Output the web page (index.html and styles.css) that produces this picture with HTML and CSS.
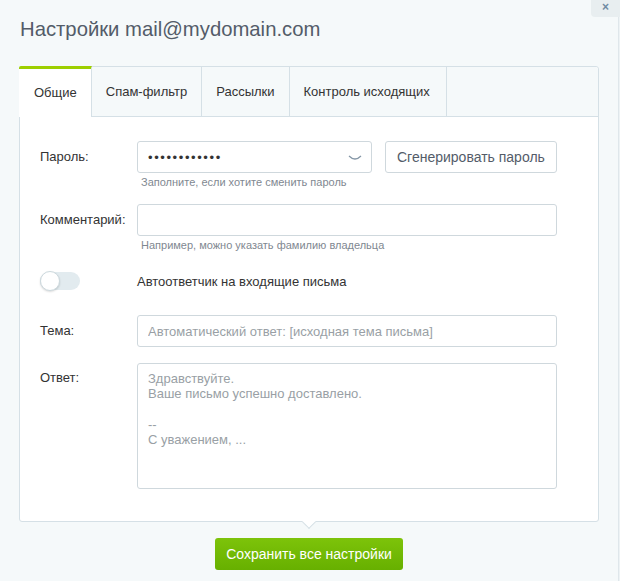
FILE: index.html
```html
<!DOCTYPE html>
<html lang="ru">
<head>
    <meta charset="UTF-8">
    <title>Настройки ящика</title>
    <link rel="stylesheet" href="styles.css">
</head>
<body>

<div class="popup">
    <span class="close" title="Закрыть">&times;</span>

    <h1 class="title">Настройки mail@mydomain.com</h1>

    <div class="panel">
        <div class="tabs">
            <div class="tab tab-active">Общие</div>
            <div class="tab">Спам-фильтр</div>
            <div class="tab">Рассылки</div>
            <div class="tab">Контроль исходящих</div>
        </div>

        <div class="panel-body">
            <div class="row row-pass">
                <div class="label">Пароль:</div>
                <div class="field">
                    <div class="pass-line">
                        <div class="pass-wrap">
                            <input class="input input-pass" type="password" value="123456789012">
                            <svg class="eye" width="14" height="6" viewBox="0 0 14 6">
                                <path d="M1 1 Q7 7 13 1" fill="none" stroke="#8496a6" stroke-width="1.2"/>
                            </svg>
                        </div>
                        <button class="btn">Сгенерировать пароль</button>
                    </div>
                    <div class="hint">Заполните, если хотите сменить пароль</div>
                </div>
            </div>

            <div class="row row-comment">
                <div class="label">Комментарий:</div>
                <div class="field">
                    <input class="input" type="text">
                    <div class="hint">Например, можно указать фамилию владельца</div>
                </div>
            </div>

            <div class="row row-switch">
                <div class="label">
                    <span class="switch"><span class="knob"></span></span>
                </div>
                <div class="field switch-text">Автоответчик на входящие письма</div>
            </div>

            <div class="row row-subject">
                <div class="label">Тема:</div>
                <div class="field">
                    <input class="input" type="text" placeholder="Автоматический ответ: [исходная тема письма]">
                </div>
            </div>

            <div class="row row-answer">
                <div class="label label-top">Ответ:</div>
                <div class="field">
                    <textarea class="textarea" placeholder="Здравствуйте.&#10;Ваше письмо успешно доставлено.&#10;&#10;--&#10;С уважением, ..."></textarea>
                </div>
            </div>
        </div>
    </div>

    <div class="footer">
        <button class="btn-save">Сохранить все настройки</button>
    </div>
</div>

</body>
</html>
```

FILE: styles.css
```css
* {
    margin: 0;
    padding: 0;
    box-sizing: border-box;
}

body {
    background: #eef3f5;
    font-family: "Liberation Sans", Arial, sans-serif;
    color: #333;
    height: 581px;
    overflow: hidden;
}

.popup {
    width: 619px;
    height: 581px;
    background: #f5f9fa;
    border-right: 1px solid #dfe7eb;
}

.close {
    position: absolute;
    top: 0;
    right: 0;
    width: 29px;
    height: 17px;
    background: #e8eef0;
    border-bottom-left-radius: 4px;
    color: #6f8ba3;
    font-size: 12px;
    font-weight: bold;
    line-height: 15px;
    text-align: center;
}

.title {
    padding: 17px 20px 0;
    font-size: 20.3px;
    font-weight: normal;
    line-height: 24px;
    color: #535c69;
}

.panel {
    position: relative;
    margin: 25px 0 0 19px;
    width: 580px;
    border: 1px solid #d5e0e6;
    border-radius: 3px;
    background: #fff;
}

/* уголок под панелью */
.panel:after {
    content: "";
    position: absolute;
    left: 284px;
    bottom: -6px;
    width: 9px;
    height: 9px;
    background: #fff;
    border-right: 1px solid #d5e0e6;
    border-bottom: 1px solid #d5e0e6;
    transform: rotate(45deg);
}

.tabs {
    display: flex;
    height: 50px;
    background: #f5f9fa;
    border-bottom: 1px solid #d5e0e6;
    border-radius: 3px 3px 0 0;
}

.tab {
    padding: 0 14px;
    line-height: 49px;
    font-size: 13px;
    color: #333;
    border-right: 1px solid #d5e0e6;
}

.tab-active {
    margin: -1px 0 -1px -1px;
    padding-left: 15px;
    height: 51px;
    line-height: 47px;
    background: #fff;
    border-top: 3px solid #9dcf00;
    border-radius: 2px 0 0 0;
}

.tab:last-child {
    padding-right: 16px;
}

.panel-body {
    padding: 24px 40px 32px 20px;
}

.row {
    display: flex;
}

.label {
    width: 97px;
    flex-shrink: 0;
    font-size: 13px;
    line-height: 32px;
    color: #333;
}

.label-top {
    line-height: 30px;
}

.field {
    width: 420px;
}

.row-comment {
    margin-top: 15px;
}

.row-switch {
    margin-top: 19px;
    height: 20px;
    align-items: center;
}

.row-subject {
    margin-top: 24px;
}

.row-answer {
    margin-top: 16px;
}

.pass-line {
    display: flex;
    gap: 13px;
}

.pass-wrap {
    position: relative;
    width: 236px;
}

.eye {
    position: absolute;
    top: 14px;
    right: 10px;
}

.input {
    display: block;
    width: 100%;
    height: 32px;
    padding: 0 10px;
    border: 1px solid #cfd8dd;
    border-radius: 3px;
    background: #fff;
    font-family: "Liberation Sans", Arial, sans-serif;
    font-size: 13px;
    color: #333;
    outline: none;
}

.input-pass {
    padding-right: 30px;
    letter-spacing: 1.6px;
}

.input::placeholder,
.textarea::placeholder {
    color: #999fa5;
    opacity: 1;
}

.btn {
    width: 173px;
    height: 32px;
    border: 1px solid #cfd8dd;
    border-radius: 3px;
    background: #fff;
    font-family: "Liberation Sans", Arial, sans-serif;
    font-size: 14px;
    color: #535c69;
}

.hint {
    margin: 2px 0 0 4px;
    font-size: 11px;
    line-height: 14px;
    color: #7f8891;
}

.switch {
    display: block;
    position: relative;
    width: 40px;
    height: 18px;
    border-radius: 9px;
    background: #e2ebef;
}

.knob {
    position: absolute;
    top: -1px;
    left: 0;
    width: 20px;
    height: 20px;
    border-radius: 50%;
    background: #fff;
    border: 1px solid #cdd9de;
    box-shadow: 0 1px 2px rgba(0, 0, 0, 0.15);
}

.switch-text {
    font-size: 13px;
    color: #333;
}

.textarea {
    display: block;
    width: 100%;
    height: 126px;
    padding: 7px 10px;
    border: 1px solid #cfd8dd;
    border-radius: 3px;
    background: #fff;
    font-family: "Liberation Sans", Arial, sans-serif;
    font-size: 13px;
    line-height: 15.3px;
    color: #333;
    resize: none;
    outline: none;
}

.footer {
    width: 580px;
    margin-left: 19px;
    padding-top: 16px;
    text-align: center;
}

.btn-save {
    height: 32px;
    padding: 0 11px;
    border: none;
    border-radius: 3px;
    background: linear-gradient(#7dc30a, #67b000);
    font-family: "Liberation Sans", Arial, sans-serif;
    font-size: 14px;
    color: #fff;
}
```
